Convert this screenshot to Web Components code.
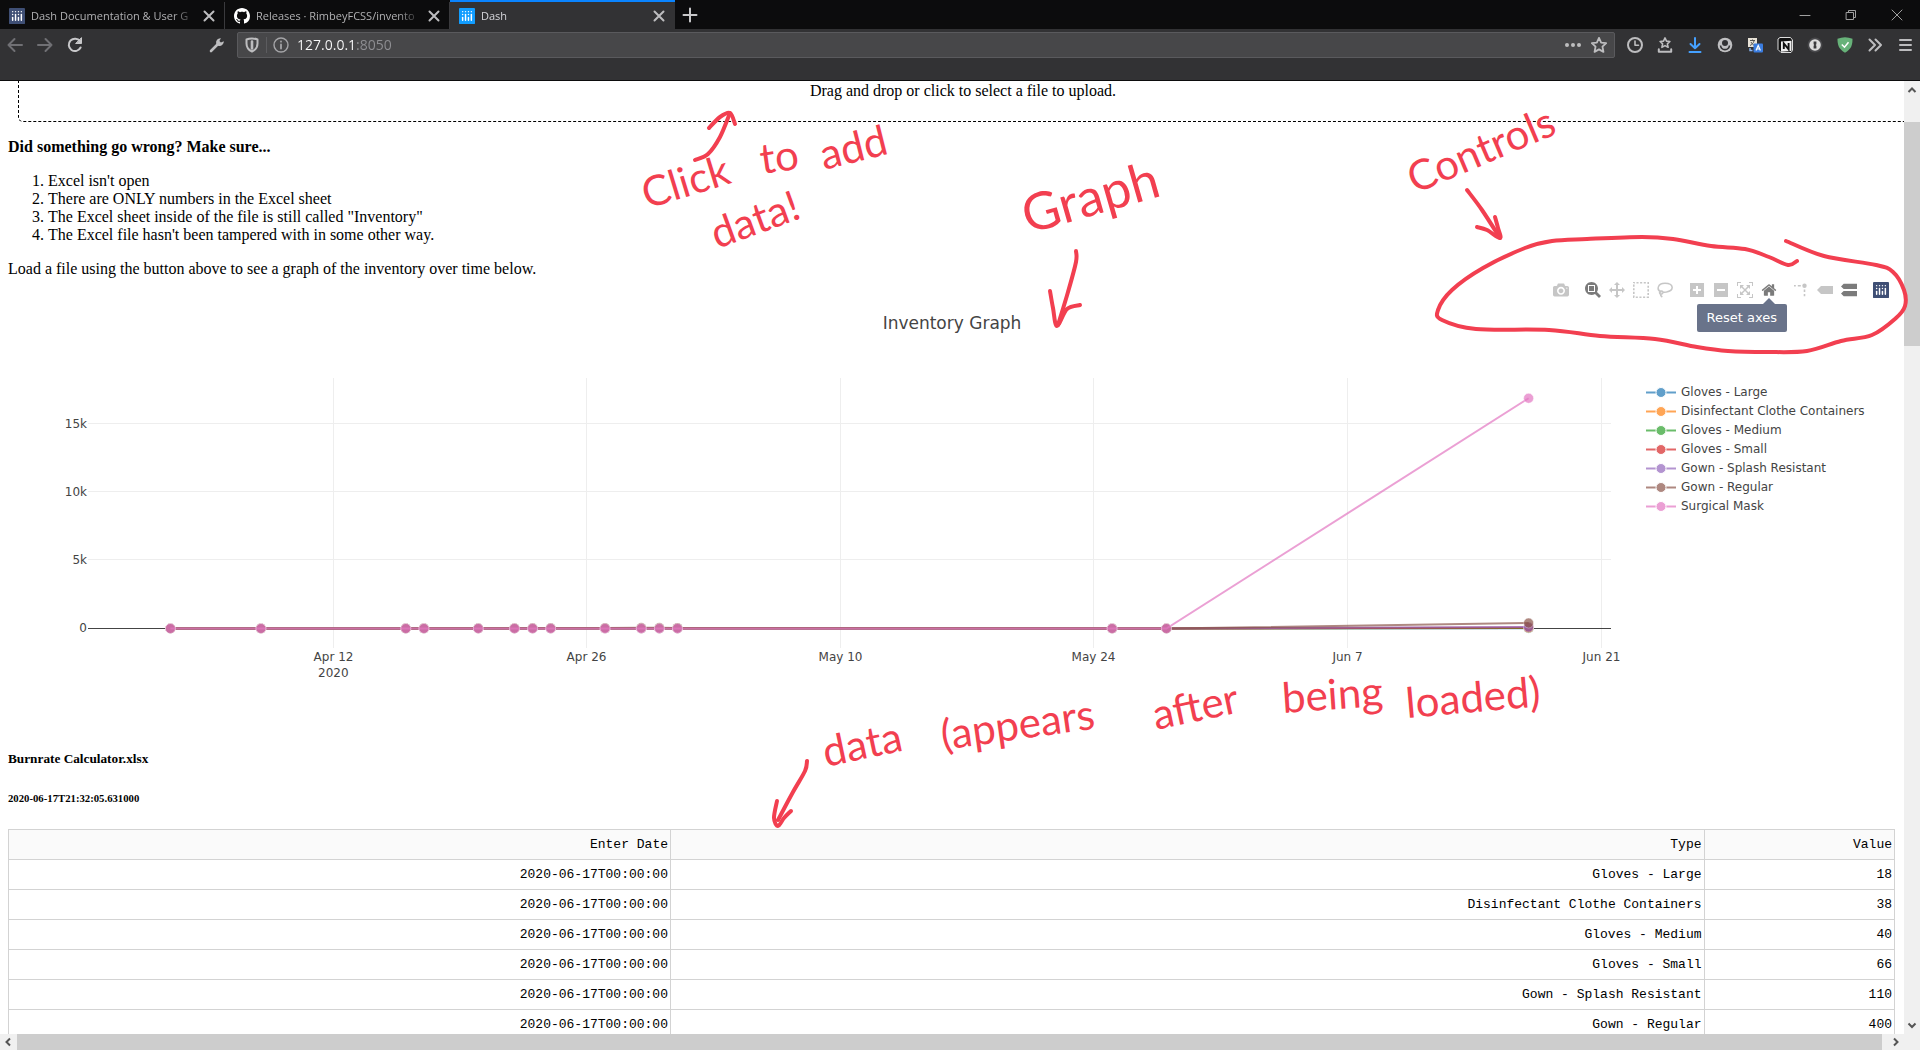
<!DOCTYPE html>
<html lang="en">
<head>
<meta charset="utf-8">
<title>Dash</title>
<style>
  html, body { height: 100%; margin: 0; }
  body { overflow: hidden; background: #fff; }
</style>
</head>
<body>
<browser-window>
  <browser-tab slot="tabs" icon="plotly-dim" label="Dash Documentation &amp; User G"></browser-tab>
  <browser-tab slot="tabs" icon="github" label="Releases · RimbeyFCSS/invento"></browser-tab>
  <browser-tab slot="tabs" icon="plotly-blue" label="Dash" active></browser-tab>
  <inventory-page></inventory-page>
</browser-window>
<ink-notes></ink-notes>

<script>
const BARS = '<g fill="#fff"><circle cx="102" cy="30" r="6"/><circle cx="78" cy="30" r="6"/><circle cx="78" cy="54" r="6"/><circle cx="54" cy="30" r="6"/><circle cx="30" cy="30" r="6"/><circle cx="30" cy="54" r="6"/><rect x="24" y="72" width="12" height="36" rx="6"/><rect x="72" y="72" width="12" height="36" rx="6"/><rect x="48" y="48" width="12" height="60" rx="6"/><rect x="96" y="48" width="12" height="60" rx="6"/></g>';
const plotly = (color, s = 16) => `<svg width="${s}" height="${s}" viewBox="0 0 132 132"><rect width="132" height="132" rx="4" fill="${color}"/>${BARS}</svg>`;

const stroke = (body, color = '#bdbdbf', w = 2) => `<svg width="16" height="16" viewBox="0 0 16 16" fill="none" stroke="${color}" stroke-width="${w}" stroke-linecap="round" stroke-linejoin="round">${body}</svg>`;

const ICONS = {
  'plotly-dim': plotly('#3f4f75'),
  'plotly-blue': plotly('#119dff'),
  github: '<svg width="16" height="16" viewBox="0 0 16 16" fill="#fff"><path fill-rule="evenodd" d="M8 0C3.58 0 0 3.58 0 8c0 3.54 2.29 6.53 5.47 7.59.4.07.55-.17.55-.38 0-.19-.01-.82-.01-1.49-2.01.37-2.53-.49-2.69-.94-.09-.23-.48-.94-.82-1.13-.28-.15-.68-.52-.01-.53.63-.01 1.08.58 1.23.82.72 1.21 1.87.87 2.33.66.07-.52.28-.87.51-1.07-1.78-.2-3.64-.89-3.64-3.95 0-.87.31-1.59.82-2.15-.08-.2-.36-1.02.08-2.12 0 0 .67-.21 2.2.82.64-.18 1.32-.27 2-.27s1.36.09 2 .27c1.53-1.04 2.2-.82 2.2-.82.44 1.1.16 1.92.08 2.12.51.56.82 1.27.82 2.15 0 3.07-1.87 3.75-3.65 3.95.29.25.54.73.54 1.48 0 1.07-.01 1.93-.01 2.2 0 .21.15.46.55.38A8.01 8.01 0 0 0 16 8c0-4.42-3.58-8-8-8z"/></svg>',
  x: stroke('<path d="M3.5 3.5l9 9M12.500 3.500l-9 9"/>'),
  plus: stroke('<path d="M8 1.500v13M1.500 8h13"/>', '#c8c8ca'),
  back: stroke('<path d="M15 8H1.500M7.500 2L1.500 8l6 6"/>', '#707074'),
  forward: stroke('<path d="M1 8h13.500M8.500 2l6 6-6 6"/>', '#707074'),
  reload: stroke('<path d="M13.600 10.500A6.200 6.200 0 1 1 13 4.200"/><path d="M14.500 1v5.500H9z" fill="#c8c8ca" stroke-width="1"/>', '#c8c8ca'),
  wrench: '<svg width="16" height="16" viewBox="0 0 16 16"><path d="M2 14l6.500-6.500" stroke="#bdbdbf" stroke-width="2.600" stroke-linecap="round"/><path d="M14.800 4.200l-2.900 1.400-1.500-1.500 1.500-2.900a4.300 4.300 0 0 0-4.600 5.700l1.800 1.800a4.300 4.300 0 0 0 5.700-4.500z" fill="#bdbdbf"/></svg>',
  shield: stroke('<path d="M8 1.500c2 0 4 .4 5.500 1v4c0 4-2 6.500-5.500 8-3.500-1.500-5.500-4-5.500-8v-4c1.500-.6 3.500-1 5.500-1z"/><path d="M8 4.500v7" stroke-width="2.600"/>'),
  info: stroke('<circle cx="8" cy="8" r="7"/><path d="M8 7.500v4M8 4.500v.2" stroke-width="1.800"/>', '#a5a5a8', 1.4),
  dots: '<svg width="18" height="16" viewBox="0 0 18 16" fill="#bdbdbf"><circle cx="3" cy="8" r="2"/><circle cx="9" cy="8" r="2"/><circle cx="15" cy="8" r="2"/></svg>',
  star: stroke('<path d="M8 .9l2.150 4.700 5 .6-3.700 3.500 1 5.200L8 12.400l-4.450 2.500 1-5.200L.850 6.200l5-.6z"/>', '#bdbdbf', 1.8),
  clock: stroke('<circle cx="8" cy="8" r="7"/><path d="M8 4v4.300h3.500" stroke-width="1.600"/>'),
  tray: stroke('<path d="M8 .9l1.500 3.200 3.400.4-2.500 2.300.7 3.500L8 8.600l-3.100 1.700.7-3.500L3.100 4.500l3.400-.4z" stroke-width="1.600"/><path d="M1.800 12.200v2.500h12.400v-2.500"/>'),
  download: stroke('<path d="M8 1v10M3.500 7L8 11.200 12.500 7M2.500 15h11" />', '#45a1ff'),
  account: '<svg width="16" height="16" viewBox="0 0 16 16"><circle cx="8" cy="8" r="7.300" fill="#c0c0c2"/><circle cx="8" cy="6" r="3" fill="#323234"/><path d="M3.500 8.500c.8 5.500 8.200 5.500 9 0" fill="none" stroke="#323234" stroke-width="1.600"/></svg>',
  translate: '<svg width="16" height="16" viewBox="0 0 16 16"><rect x="1" y="1" width="9" height="9" fill="#e8e2d6"/><path d="M3 3.500h5M5.500 2.500v1M7 4c-.5 2-2 3.500-4 4.500M4 5c1 2 2 3 4 3.500" stroke="#555" fill="none"/><rect x="6.500" y="6.500" width="9.500" height="9" rx="1" fill="#3b7de0"/><path d="M9 13.500l2.200-5 2.200 5M9.800 12h2.900" stroke="#fff" stroke-width="1.200" fill="none"/><path d="M3 11v2.500h2.500" stroke="#8ab4f0" stroke-width="1.400" fill="none"/></svg>',
  notion: '<svg width="16" height="16" viewBox="0 0 16 16"><path d="M1 2l2-1.500h10.500L15.500 3v10.500l-1.500 2H4L1 12.500z" fill="#111" stroke="#ddd" stroke-width="1"/><path d="M4 4.500l10.500-.8v10.200l-10.500.8z" fill="#eee"/><path d="M6.800 12V6.500l4.800 5.800V6" fill="none" stroke="#111" stroke-width="1.900"/></svg>',
  pass: '<svg width="16" height="16" viewBox="0 0 16 16"><circle cx="8" cy="8" r="7.500" fill="#48484b"/><circle cx="8" cy="8" r="5.800" fill="#dcdcdc"/><path d="M6.600 4.500h2.800v2.800l-.8.700.8.700v2.800H6.600V8.700l.7-.7-.7-.7z" fill="#3a3a3c"/></svg>',
  adguard: '<svg width="16" height="16" viewBox="0 0 16 16"><path d="M8 .3c2.500 0 5 .5 7.500 1.500 0 5-.5 10-7.500 14C1 11.800.5 6.800.5 1.800 3 .8 5.500.3 8 .3z" fill="#67b279"/><path d="M4.800 7.500l2.700 2.700 4-5" stroke="#fff" stroke-width="1.500" fill="none"/></svg>',
  more: stroke('<path d="M2.500 2.500L8 8l-5.500 5.500M8.500 2.500L14 8l-5.500 5.500"/>'),
  menu: stroke('<path d="M3 3h11M3 8h11M3 13h11"/>'),
  min: stroke('<path d="M3 8.500h10"/>', '#a0a0a0', 1),
  restore: stroke('<path d="M3.500 5.500h7v7h-7zM5.500 5.500v-2h7v7h-2"/>', '#a0a0a0', 1),
  close: stroke('<path d="M3 3l10 10M13 3L3 13"/>', '#a0a0a0', 1)
};

const font = (d, w = 1000) => `<svg width="16" height="16" viewBox="0 0 ${w} 1000"><path transform="matrix(1 0 0 -1 0 850)" d="${d}"/></svg>`;
const MODEBAR = {
  camera: font('m500 450c-83 0-150-67-150-150 0-83 67-150 150-150 83 0 150 67 150 150 0 83-67 150-150 150z m400 150h-120c-16 0-34 13-39 29l-31 93c-6 15-23 28-40 28h-340c-16 0-34-13-39-28l-31-94c-6-15-23-28-40-28h-120c-55 0-100-45-100-100v-450c0-55 45-100 100-100h800c55 0 100 45 100 100v450c0 55-45 100-100 100z m-400-550c-138 0-250 112-250 250 0 138 112 250 250 250 138 0 250-112 250-250 0-138-112-250-250-250z m365 380c-19 0-35 16-35 35 0 19 16 35 35 35 19 0 35-16 35-35 0-19-16-35-35-35z'),
  zoom: font('m1000-25l-250 251c40 63 63 138 63 218 0 224-182 406-407 406-224 0-406-182-406-406s183-406 407-406c80 0 155 22 218 62l250-250 125 125z m-812 250l0 438 437 0 0-438-437 0z m62 375l313 0 0-312-313 0 0 312z'),
  pan: font('m1000 350l-187 188 0-125-250 0 0 250 125 0-188 187-187-187 125 0 0-250-250 0 0 125-188-188 186-187 0 125 252 0 0-250-125 0 187-188 188 188-125 0 0 250 250 0 0-126 187 188z'),
  select: '<svg width="16" height="16" viewBox="0 0 16 16"><path fill="none" stroke="#444" stroke-width="1.600" stroke-dasharray="2.100 1.550" stroke-dashoffset="1" d="M.8 .8h14.400v14.400H.8z"/></svg>',
  lasso: '<svg width="16" height="16" viewBox="0 0 16 16"><path fill="none" stroke="#444" stroke-width="1.500" d="M4.500 10.200C-1 8 .5 1.200 8 1.200c9 0 9.500 7.500 1.500 8.800-1.500.2-3 .2-3.500-.1M6 10.500a1.700 1.700 0 1 0-3 1.200c1 .8 2.900.4 3-1.200zM3.500 12c-.2 1.300.5 2.200 1.800 3"/></svg>',
  plus: font('m1 787l0-875 875 0 0 875-875 0z m687-500l-187 0 0-187-125 0 0 187-188 0 0 125 188 0 0 187 125 0 0-187 187 0 0-125z', 875),
  minus: font('m0 788l0-876 875 0 0 876-875 0z m688-500l-500 0 0 125 500 0 0-125z', 875),
  auto: font('m250 850l-187 0-63 0 0-62 0-188 63 0 0 188 187 0 0 62z m688 0l-188 0 0-62 188 0 0-188 62 0 0 188 0 62-62 0z m-875-938l0 188-63 0 0-188 0-62 63 0 187 0 0 62-187 0z m875 188l0-188-188 0 0-62 188 0 62 0 0 62 0 188-62 0z m-125 188l-1 0-93-94-156 156 156 156 92-93 2 0 0 250-250 0 0-2 93-92-156-156-156 156 94 92 0 2-250 0 0-250 0 0 93 93 157-156-157-156-93 94 0 0 0-250 250 0 0 0-94 93 156 157 156-157-93-93 0 0 250 0 0 250z'),
  home: font('m786 296v-267q0-15-11-26t-25-10h-214v214h-143v-214h-214q-15 0-25 10t-11 26v267q0 1 0 2t0 2l321 264 321-264q1-1 1-4z m124 39l-34-41q-5-5-12-6h-2q-7 0-12 3l-386 322-386-322q-7-4-13-4-7 2-12 7l-35 41q-4 5-3 13t6 12l401 334q18 15 42 15t43-15l136-114v109q0 8 5 13t13 5h107q8 0 13-5t5-13v-227l122-102q5-5 6-12t-4-13z', 928),
  spike: '<svg width="16" height="16" viewBox="0 0 16 16" fill="#444"><circle cx="11.500" cy="3.800" r="2.200"/><path d="M1 3h1.800v1.500H1zM4.800 3h3v1.500h-3zM10.700 7.500h1.600v2.500h-1.600zM10.700 12h1.600v2.300h-1.600z"/></svg>',
  closest: font('m375 725l0 0-375-375 375-374 0-1 1125 0 0 750-1125 0z', 1500),
  compare: font('m187 786l0 2-187-188 188-187 0 0 937 0 0 373-938 0z m0-499l0 1-187-188 188-188 0 0 937 0 0 376-938-1z', 1125),
  logo: plotly('#3f4f75')
};

/* Base: puts a component's markup and styles into an open shadow root. */
class Base extends HTMLElement {
  constructor() { super(); this.attachShadow({ mode: 'open' }); }
  connectedCallback() { this.shadowRoot.innerHTML = this.render(); this.ready(); }
  ready() {}
}

customElements.define('browser-tab', class extends Base {
  render() {
    const on = this.hasAttribute('active');
    return `<style>
      :host { display: flex; flex: 0 1 225px; align-items: center; gap: 4px; padding: 0 8px 0 9px; box-sizing: border-box; min-width: 0;
        border-top: 2px solid ${on ? '#0a84ff' : 'transparent'}; background: ${on ? '#323234' : 'transparent'};
        box-shadow: ${on ? 'none' : 'inset -1px 0 #3a3a3d'}; }
      button { all: unset; display: flex; cursor: default; }
      .pick { flex: 1; min-width: 0; gap: 6px; align-items: center; color: ${on ? '#d7d7db' : '#b1b1b3'}; }
      span { flex: 1; overflow: hidden; white-space: nowrap; font: 11px/18px "Open Sans", sans-serif;
        -webkit-mask-image: linear-gradient(to left, transparent, #000 24px); mask-image: linear-gradient(to left, transparent, #000 24px); }
      svg { display: block; flex: none; }
    </style>
    <button class="pick" role="tab" aria-selected="${on}">${ICONS[this.getAttribute('icon')]}<span>${this.getAttribute('label').replace('&', '&amp;')}</span></button>
    <button aria-label="Close tab">${ICONS.x}</button>`;
  }
});

customElements.define('icon-button', class extends Base {
  render() {
    return `<style>:host { display: flex; justify-content: center; width: 30px; }
      button { all: unset; display: flex; cursor: default; } svg { display: block; }</style>
      <button aria-label="${this.getAttribute('name')}">${ICONS[this.getAttribute('name')]}</button>`;
  }
});

customElements.define('scroll-bar', class extends Base {
  render() {
    const v = this.getAttribute('axis') === 'y';
    const [a, b, c] = this.getAttribute('parts').split(' ');
    const arrow = d => `<svg width="16" height="16" viewBox="0 0 16 16" fill="none" stroke="#555" stroke-width="2"><path d="${d}"/></svg>`;
    return `<style>
      :host { display: flex; flex-direction: ${v ? 'column' : 'row'}; background: #f0f0f0; align-items: stretch; }
      div { flex: 1 1 0; } .a { flex-grow: ${a}; } .b { flex-grow: ${b}; background: #cdcdcd; } .c { flex-grow: ${c}; }
      svg { display: block; flex: none; }
    </style>${arrow(v ? 'M4.500 11l3.500-3.500 3.500 3.500' : 'M10 4.500L6.500 8l3.500 3.500')}<div class="a"></div><div class="b"></div><div class="c"></div>${arrow(v ? 'M4.500 5.500L8 9l3.500-3.500' : 'M6 4.500L9.500 8 6 11.500')}`;
  }
});

customElements.define('browser-window', class extends Base {
  render() {
    const b = n => `<icon-button name="${n}"></icon-button>`;
    return `<style>
      :host { display: flex; flex-direction: column; height: 100vh; }
      .tabs { display: flex; height: 29px; background: #0c0c0d; }
      .tabs icon-button { align-items: center; }
      .sys { margin-left: auto; display: flex; padding-right: 8px; gap: 16px; }
      .bar { display: flex; align-items: center; height: 32px; padding: 0 0 19px; background: #323234; border-bottom: 1px solid #0c0c0d; }
      .url { display: flex; align-items: center; flex: 1; height: 24px; margin-left: 5px; border: 1px solid #5a5a5d; border-radius: 2px; background: #474749; }
      .url icon-button { width: 28px; }
      .url icon-button + icon-button { border-left: 1px solid #5c5c5f; }
      .url .end { width: 26px; }
      .url .end + .end { border: 0; margin-right: 2px; }
      .wrench { margin-left: 112px; }
      input { all: unset; flex: 1; padding-left: 2px; font: 14px/20px "Open Sans", sans-serif; color: transparent;
        background: linear-gradient(90deg, #f9f9fa 61px, #8f8f93 61px); -webkit-background-clip: text; background-clip: text; }
      .nav { display: flex; }
      .tools { padding-left: 5px; }
      .view { display: grid; grid-template: 1fr 16px / 1fr 16px; flex: 1; min-height: 0; background: #f0f0f0; }
      main { overflow: hidden; background: #fff; min-width: 0; }
    </style>
    <div class="tabs" role="tablist"><slot name="tabs"></slot>${b('plus')}<div class="sys">${b('min')}${b('restore')}${b('close')}</div></div>
    <div class="bar"><div class="nav">${b('back')}${b('forward')}${b('reload')}</div><icon-button class="wrench" name="wrench"></icon-button>
      <div class="url">${b('shield')}${b('info')}<input aria-label="Address" value="127.0.0.1:8050"><icon-button class="end" name="dots"></icon-button><icon-button class="end" name="star"></icon-button></div>
      <div class="nav tools">${['clock','tray','download','account','translate','notion','pass','adguard','more','menu'].map(b).join('')}</div></div>
    <div class="view"><main><slot></slot></main><scroll-bar axis="y" parts="25 224 672"></scroll-bar><scroll-bar axis="x" parts="1 1864 6"></scroll-bar></div>`;
  }
});

customElements.define('drop-zone', class extends Base {
  render() {
    return `<style>
      :host { display: block; margin: 0 10px; width: 100%; }
      label { display: block; box-sizing: content-box; width: 100%; line-height: 60px; text-align: center; border: 1px dashed #000; border-radius: 5px; }
      input { position: absolute; width: 1px; height: 1px; opacity: 0; }
    </style><label><input type="file"><slot></slot></label>`;
  }
});

customElements.define('mode-bar', class extends Base {
  render() {
    const groups = [['camera'], ['zoom', 'pan', 'select', 'lasso'], ['plus', 'minus', 'auto', 'home'], ['spike', 'closest', 'compare'], ['logo']];
    return `<style>
      :host { display: flex; gap: 8px; }
      div { display: flex; }
      button { all: unset; position: relative; width: 24px; height: 20px; display: flex; align-items: center; justify-content: center; }
      svg { opacity: .3; fill: #444; } .zoom svg, .home svg, .compare svg { opacity: .7; } .logo svg { opacity: 1; }
      .tip { position: absolute; top: 24px; right: -6px; padding: 6px 10px; border-radius: 2px; background: #69738a; color: #fff; font: 13px/16px "DejaVu Sans", sans-serif; white-space: nowrap; }
      .tip::before { content: ""; position: absolute; top: -6px; right: 12px; border: 6px solid transparent; border-top: 0; border-bottom-color: #69738a; }
    </style>` + groups.map(g => `<div>${g.map(n => `<button class="${n}" aria-label="${n}">${MODEBAR[n]}${n === 'home' ? '<span class="tip">Reset axes</span>' : ''}</button>`).join('')}</div>`).join('');
  }
});

customElements.define('chart-legend', class extends Base {
  render() {
    const items = [['#1f77b4', 'Gloves - Large'], ['#ff7f0e', 'Disinfectant Clothe Containers'], ['#2ca02c', 'Gloves - Medium'], ['#d62728', 'Gloves - Small'], ['#9467bd', 'Gown - Splash Resistant'], ['#8c564b', 'Gown - Regular'], ['#e377c2', 'Surgical Mask']];
    return `<style>
      :host { display: block; } ul { list-style: none; margin: 0; padding: 0; }
      li { display: flex; align-items: center; gap: 5px; height: 19px; font: 12px/19px "DejaVu Sans", sans-serif; color: #444; white-space: nowrap; }
    </style><ul>${items.map(([c, t]) => `<li><svg width="30" height="13" opacity=".7"><path d="M0 6.500h30" stroke="${c}" stroke-width="2"/><circle cx="15" cy="6.500" r="5" fill="${c}" stroke="#fff"/></svg>${t}</li>`).join('')}</ul>`;
  }
});

customElements.define('line-chart', class extends Base {
  render() {
    return `<style>
      :host { display: block; min-width: 0; } svg { display: block; overflow: visible; }
      text { font: 12px "DejaVu Sans", sans-serif; fill: #444; }
    </style><div></div>`;
  }
  ready() { this.draw(); new ResizeObserver(() => this.draw()).observe(this); }
  draw() {
    const w = this.clientWidth, left = 80, top = 0, zero = 250, bottom = 270, day = (w - left) / 84.1;
    const x = d => left + 13.55 * day + d * day, y = v => zero - v * 0.013665;
    let s = '';
    [['Apr 12', 0], ['Apr 26', 14], ['May 10', 28], ['May 24', 42], ['Jun 7', 56], ['Jun 21', 70]].forEach(([t, d]) => {
      const px = Math.floor(x(d)) + .5;
      s += `<path d="M${px} ${top}V${bottom}" stroke="#eee"/><text x="${px}" y="283" text-anchor="middle">${t}</text>`;
    });
    s += `<text x="${x(0)}" y="299" text-anchor="middle">2020</text>`;
    [[5000, '5k'], [10000, '10k'], [15000, '15k']].forEach(([v, t]) => {
      const py = Math.floor(y(v)) + .5;
      s += `<path d="M${left} ${py}H${w}" stroke="#eee"/><text x="${left - 1}" y="${py + 4}" text-anchor="end">${t}</text>`;
    });
    s += `<path d="M${left} 250.500H${w}" stroke="#444"/><text x="${left - 1}" y="254" text-anchor="end">0</text>`;
    const days = [-9, -4, 4, 5, 8, 10, 11, 12, 15, 17, 18, 19, 43, 46, 66];
    const series = [['#1f77b4', 18], ['#ff7f0e', 38], ['#2ca02c', 40], ['#d62728', 66], ['#9467bd', 110], ['#8c564b', 400], ['#e377c2', 16850]];
    const early = [0, 0, 0, 10, 20, 25, 30, 35, 40, 50, 50, 45, 0, 0];
    series.forEach(([c, last]) => {
      const pts = days.map((d, i) => [x(d), .5 + y(i < 14 ? (c === '#8c564b' ? early[i] : 0) : last)]);
      s += `<polyline points="${pts.join(' ')}" fill="none" stroke="${c}" stroke-width="2" opacity=".7"/>`;
      s += pts.map(p => `<circle cx="${p[0]}" cy="${p[1]}" r="5" fill="${c}" stroke="#fff" stroke-width=".5" opacity=".7"/>`).join('');
    });
    this.shadowRoot.querySelector('div').innerHTML = `<svg width="${w}" height="351">${s}</svg>`;
  }
});

customElements.define('inventory-graph', class extends Base {
  render() {
    return `<style>
      :host { display: block; position: relative; }
      h2 { margin: 0; height: 65px; padding-top: 35px; text-align: center; font: 17px/20px "DejaVu Sans", sans-serif; color: #444; }
      .plot { display: grid; grid-template-columns: 1fr 250px; column-gap: 35px; }
      chart-legend { padding-top: 5px; }
      mode-bar { position: absolute; top: 2px; right: 3px; }
    </style><h2><slot></slot></h2>
    <div class="plot"><line-chart></line-chart><chart-legend></chart-legend></div><mode-bar></mode-bar>`;
  }
});

customElements.define('data-grid', class extends Base {
  render() {
    const rows = [['Gloves - Large', 18], ['Disinfectant Clothe Containers', 38], ['Gloves - Medium', 40], ['Gloves - Small', 66], ['Gown - Splash Resistant', 110], ['Gown - Regular', 400], ['Surgical Mask', 16900]];
    return `<style>
      :host { display: block; padding-right: 1px; }
      table { width: 100%; table-layout: fixed; border-collapse: collapse; font: 13px/18px "Liberation Mono", monospace; }
      th, td { box-sizing: border-box; padding: 0 2px; border: 1px solid #d3d3d3; text-align: right; font-weight: 400; height: 30px; }
      th { background: #fafafa; } th:nth-child(1) { width: 35.1%; } th:nth-child(2) { width: 54.8%; }
    </style><table><thead><tr><th>Enter Date</th><th>Type</th><th>Value</th></tr></thead><tbody>
    ${rows.map(([t, v]) => `<tr><td>2020-06-17T00:00:00</td><td>${t}</td><td>${v}</td></tr>`).join('')}</tbody></table>`;
  }
});

customElements.define('inventory-page', class extends Base {
  render() {
    return `<style>
      :host { display: block; margin-top: -21px; padding: 0 8px; font: 16px/18px "Liberation Serif", serif; color: #000; }
      h3 { font-size: 16px; margin: 16px 0; } ol { margin: 16px 0; padding-left: 40px; } p { margin: 16px 0 0; }
      h5, h6 { line-height: normal; }
      h6 { margin-bottom: 25px; }
    </style>
    <drop-zone>Drag and drop or click to select a file to upload.</drop-zone>
    <h3>Did something go wrong? Make sure...</h3>
    <ol><li>Excel isn't open</li><li>There are ONLY numbers in the Excel sheet</li><li>The Excel sheet inside of the file is still called "Inventory"</li><li>The Excel file hasn't been tampered with in some other way.</li></ol>
    <p>Load a file using the button above to see a graph of the inventory over time below.</p>
    <inventory-graph>Inventory Graph</inventory-graph>
    <h5>Burnrate Calculator.xlsx</h5>
    <h6>2020-06-17T21:32:05.631000</h6>
    <data-grid></data-grid>`;
  }
});

/* Freehand notes pinned on top of the page. */
customElements.define('ink-notes', class extends Base {
  render() {
    const words = [
      ['Click', 647, 209, -17], ['to', 762, 174, -8], ['add', 824, 170, -14], ['data!', 717, 249, -20],
      ['Graph', 1028, 234, -16, 52], ['Controls', 1415, 194, -23],
      ['data', 826, 767, -12], ['(appears', 943, 750, -8], ['after', 1156, 730, -12], ['being', 1283, 713, -4], ['loaded)', 1407, 718, -5]
    ];
    const lines = [
      [[695, 160], [708, 154], [720, 137], [730, 113]], [[709, 128], [720, 117], [730, 113], [735, 124]],
      [[1076, 251], [1076, 262], [1068, 292], [1058, 325]], [[1050, 291], [1053, 308], [1057, 326], [1067, 309], [1080, 305]],
      [[1467, 190], [1482, 210], [1500, 238]], [[1477, 227], [1487, 230], [1500, 238], [1498, 228], [1495, 217]],
      [[807, 761], [805, 771], [793, 792], [778, 820]], [[777, 801], [774, 818], [778, 826], [784, 818], [791, 811]],
      [[1797, 261], [1788, 265], [1769, 257], [1745, 249], [1711, 246], [1673, 239], [1642, 237], [1587, 239], [1552, 241], [1525, 248], [1483, 268], [1452, 290], [1438, 310], [1442, 320], [1476, 329], [1549, 330], [1600, 336], [1655, 339], [1697, 347], [1728, 351], [1767, 352], [1807, 351], [1841, 341], [1872, 335], [1896, 318], [1905, 306], [1904, 290], [1893, 272], [1876, 265], [1824, 256], [1786, 241]]
    ];
    const smooth = p => p.reduce((d, q, i) => {
      if (!i) return `M${q}`;
      const a = p[i - 2] || p[i - 1], b = p[i - 1], n = p[i + 1] || q;
      return `${d}C${b[0] + (q[0] - a[0]) / 6} ${b[1] + (q[1] - a[1]) / 6} ${q[0] - (n[0] - b[0]) / 6} ${q[1] - (n[1] - b[1]) / 6} ${q}`;
    }, '');
    return `<style>
      :host { position: absolute; inset: 0; pointer-events: none; overflow: hidden; }
      svg { display: block; width: 100%; height: 100%; overflow: visible; }
      path { fill: none; stroke: #f23f50; stroke-width: 4; stroke-linecap: round; stroke-linejoin: round; }
      text { font-family: Lato, sans-serif; fill: #f23f50; }
    </style><svg>${lines.map(l => `<path d="${smooth(l)}"/>`).join('')}${words.map(([t, x, y, r, s = 42]) => `<text font-size="${s}" transform="translate(${x} ${y}) rotate(${r})">${t}</text>`).join('')}</svg>`;
  }
});
</script>
</body>
</html>
